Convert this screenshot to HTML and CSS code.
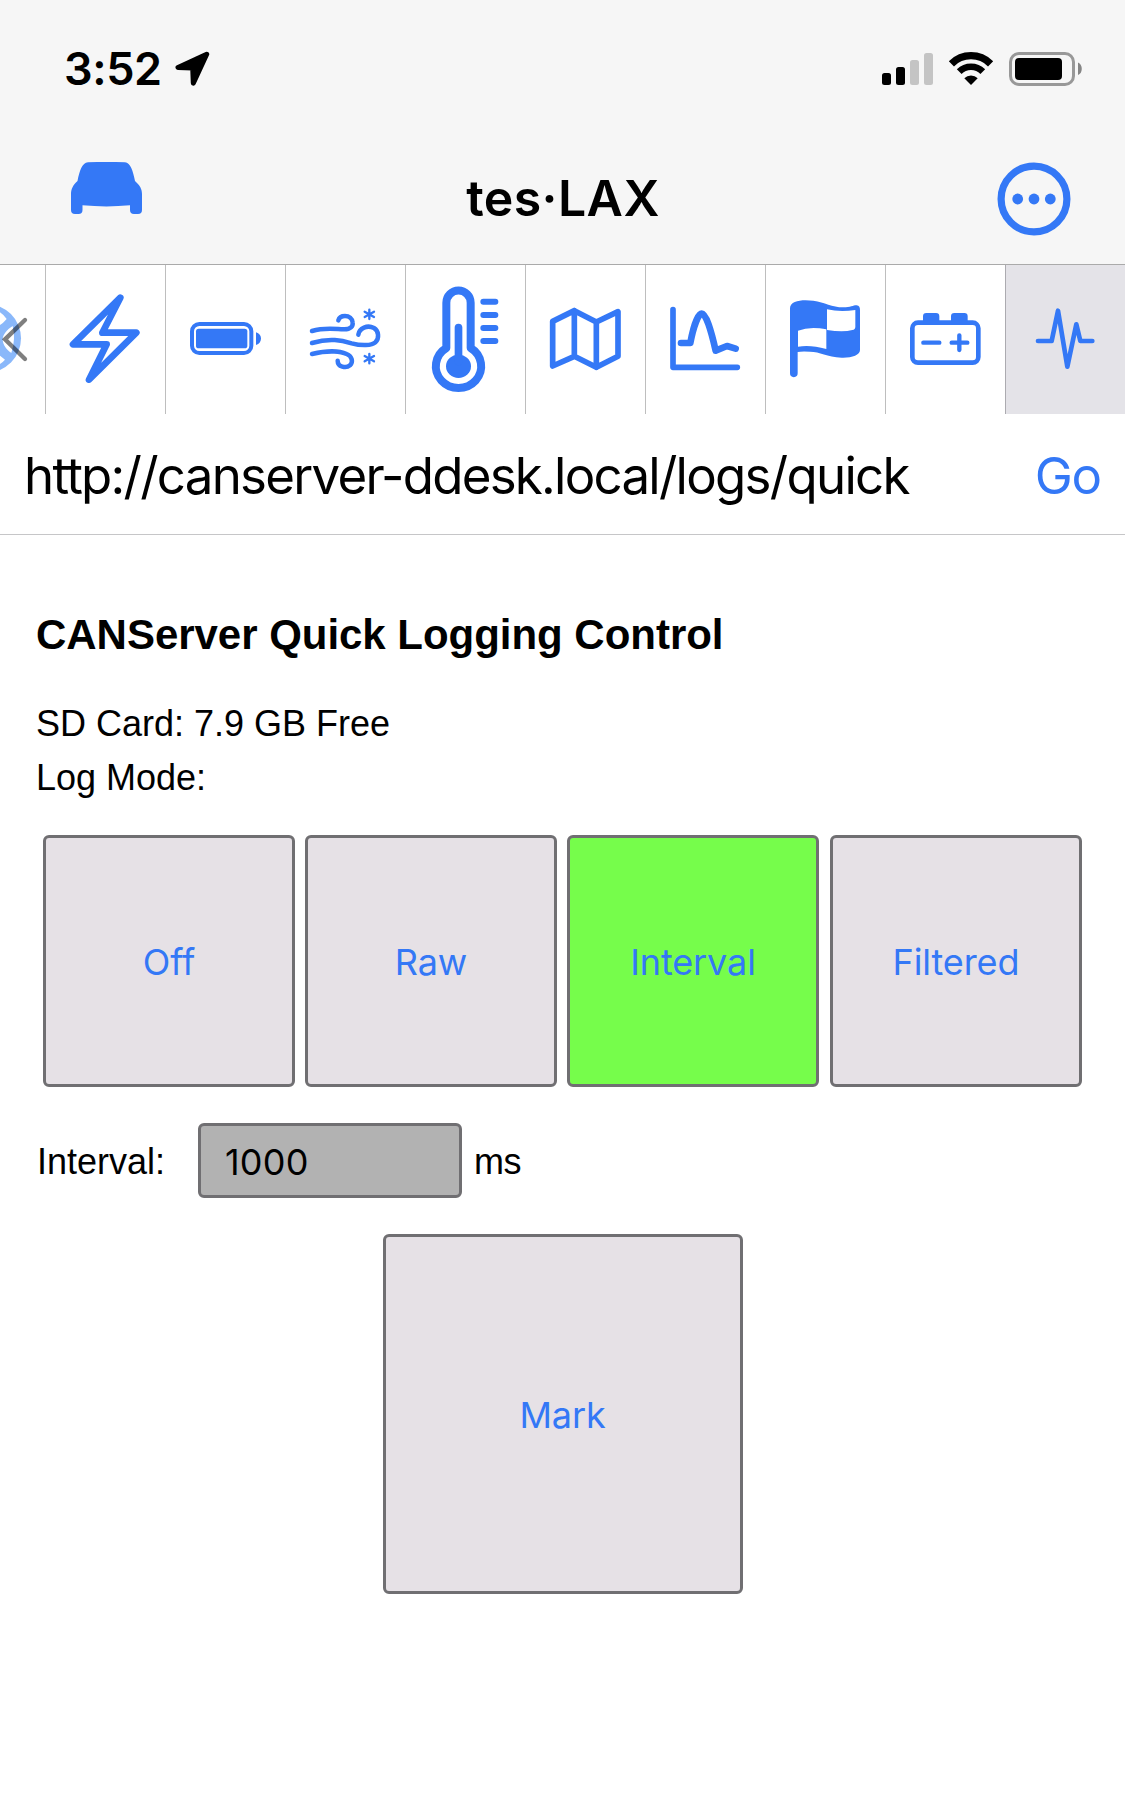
FILE: index.html
```html
<!DOCTYPE html>
<html lang="en">
<head>
<meta charset="utf-8">
<title>tes·LAX</title>
<link rel="stylesheet" href="styles.css">
</head>
<body>
<header class="header">
  <div class="status">
    <span class="time">3:52</span>
    <svg class="locate" width="36" height="36" viewBox="174 52 36 36"><path d="M206.7 55.2 178 68.4 192.7 69 193.3 84.2Z" fill="#000" stroke="#000" stroke-width="5" stroke-linejoin="round"/></svg>
    <div class="indicators">
      <svg width="51" height="34" viewBox="882 52 51 34"><rect x="882" y="73" width="9" height="12" rx="2.5"/><rect x="896" y="67" width="9" height="18" rx="2.5"/><g fill="#c4c4c4"><rect x="910" y="60" width="9" height="25" rx="2.5"/><rect x="924" y="53" width="9" height="32" rx="2.5"/></g></svg>
      <svg width="46" height="34" viewBox="948 52 46 34"><g fill="none" stroke="#000"><path stroke-width="7.3" d="M951.4 63.8A27.75 27.75 0 0 1 990.6 63.8"/><path stroke-width="6.7" d="M959.2 71.6A16.75 16.75 0 0 1 982.8 71.6"/></g><path d="M964.3 78.3A9.5 9.5 0 0 1 977.7 78.3L971 85Z"/></svg>
      <svg width="74" height="34" viewBox="1009 52 74 34"><rect x="1010.5" y="53.5" width="63" height="31" rx="8.5" fill="none" stroke="#989898" stroke-width="3"/><rect x="1015" y="58" width="47" height="22" rx="4"/><path d="M1078 62.5C1083 64 1083 73.500 1078 75Z" fill="#858585"/></svg>
    </div>
  </div>
  <div class="nav">
    <svg width="71" height="74" viewBox="71 162 71 74"><path fill="#3478f6" d="M88 162.300Q106.500 161.500 125 162.300C130.500 163 133 171 135 181 140 185.500 142 189 142 194V210Q142 214 138 214H134Q130 214 130 210V205.300Q106.500 207.500 82.500 205.300V210Q82.500 214 78.500 214H75Q71 214 71 210V194C71 189 73 185 77.500 181 79.500 171 82 163 88 162.300Z"/></svg>
    <h1 class="title">tes·LAX</h1>
    <svg width="74" height="74" viewBox="997.300 161.700 74 74"><circle cx="1034.300" cy="198.700" r="32.900" fill="none" stroke="#3478f6" stroke-width="7.200"/><g fill="#3478f6"><circle cx="1018" cy="198.700" r="5.400"/><circle cx="1034.300" cy="198.700" r="5.400"/><circle cx="1050.600" cy="198.700" r="5.400"/></g></svg>
  </div>
</header>

<nav class="tabs">
  <a class="tab tab-clipped"><svg width="45" height="149" viewBox="0 30 135 447"><circle cx="-40" cy="250" r="103" fill="#8ab8fa"/><path fill="#fff" d="M38 213C20 224 8 240 8 253 8 270 20 285 34 294Q48 253 38 213ZM0 172Q12 180 20 192 10 204 0 210ZM0 302Q8 308 15 314 8 322 0 327Z"/><path d="M75 195 15 253 75 312" fill="none" stroke="#000" stroke-opacity=".5" stroke-width="13" stroke-linecap="round"/></svg></a>
  <a class="tab"><svg viewBox="138 30 357 447"><path class="line" stroke-width="20" d="M361 128 219 268H320L267 374 409 233H307Z"/></svg></a>
  <a class="tab"><svg viewBox="498 30 357 447"><rect class="line" stroke-width="12" x="576" y="207" width="178" height="87" rx="22"/><rect class="solid" x="588" y="221" width="154" height="59" rx="8"/><path class="solid" d="M768 232C788 238 788 264 768 270Z"/></svg></a>
  <a class="tab"><svg viewBox="18 30 357 447"><path class="line" stroke-width="13.500" d="M96 228C135 216 165 222 190 223 213 224 219 213 218 203 217 190 207 183 195 183 184 183 177 189 175 196M96 264C150 248 185 256 215 265 245 273 275 272 286 262 299 250 296 227 282 219 262 209 238 219 235 239M96 297C150 284 185 290 200 297 217 304 220 322 210 331 198 341 173 336 173 317"/><path class="line" stroke-width="7" d="M268 164V192M254 170 282 186M254 186 282 170M268 297V325M254 303 282 319M254 319 282 303"/></svg></a>
  <a class="tab"><svg viewBox="378 30 357 447"><path class="line" stroke-width="24" d="M499 279V143A36.500 36.500 0 0 1 572 143V279A68 65 0 1 1 499 279Z"/><ellipse class="solid" cx="535.500" cy="334" rx="37.500" ry="35"/><path class="line" stroke-width="23" d="M535.500 218V320"/><path class="line" stroke-width="18" d="M610 140H646M610 180H646M610 219H646M610 258H646"/></svg></a>
  <a class="tab"><svg viewBox="18 30 357 447"><path class="line" stroke-width="17" d="M98 199 163 167 229 201 294 170V304L229 337 163 304 98 333ZM163 167V304M229 201V337"/></svg></a>
  <a class="tab"><svg viewBox="378 30 357 447"><path class="line" stroke-width="17" d="M459 164V337H652"/><path class="line" stroke-width="20" d="M483 264H511C520 215 535 176 545 176 558 176 573 225 587 287L621 273 647 281"/></svg></a>
  <a class="tab"><svg viewBox="18 30 357 447"><path class="solid" fill-rule="evenodd" d="M90 160C90 135 130 133 160 137 195 142 215 157 250 157 272 157 282 150 290 151 298 152 300 158 300 165V285C300 300 275 309 245 308 200 306 180 290 150 290Q125 288 113 291V355A11 11 0 0 1 90 355ZM201 163V225Q250 233 277 225 286 223 286 215V165Q240 172 201 163ZM114 227V275Q150 268 199 282V223Q150 213 114 227Z"/></svg></a>
  <a class="tab"><svg viewBox="378 30 357 447"><rect class="line" stroke-width="14" x="457" y="203" width="198" height="120" rx="17"/><path class="solid" d="M489 202V184Q489 174 499 174H528Q538 174 538 184V202ZM573 202V184Q573 174 583 174H613Q623 174 623 184V202Z"/><path class="line" stroke-width="13" d="M490 263H538M575 263H622M598 241V285"/></svg></a>
  <a class="tab tab-active"><svg viewBox="738 30 357 447"><path class="line" stroke-width="14" d="M834 258H875L894 167 922 335 949 208 961 258H997"/></svg></a>
</nav>

<div class="address">
  <span class="url">http://canserver-ddesk.local/logs/quick</span>
  <a class="go">Go</a>
</div>

<main class="page">
  <h2 class="heading">CANServer Quick Logging Control</h2>
  <p class="info">SD Card: 7.9 GB Free</p>
  <p class="info">Log Mode:</p>
  <div class="modes">
    <button class="btn">Off</button>
    <button class="btn">Raw</button>
    <button class="btn btn-on">Interval</button>
    <button class="btn">Filtered</button>
  </div>
  <div class="interval">
    <label class="interval-label" for="ms">Interval:</label>
    <input class="field" id="ms" type="text" value="1000">
    <span class="unit">ms</span>
  </div>
  <button class="btn mark">Mark</button>
</main>
</body>
</html>
```
FILE: styles.css
```css
* { box-sizing: border-box; }

body {
  margin: 0;
  width: 1125px;
  height: 1817px;
  overflow: hidden;
  background: #fff;
  color: #000;
  font-family: Inter, sans-serif;
}

svg { display: block; flex: none; }

.header {
  height: 265px;
  background: #f6f6f6;
  border-bottom: 1px solid #aaa;
}

.status {
  height: 132px;
  padding: 6px 42px 0 64px;
  display: flex;
  align-items: center;
}
.time { width: 110px; font-size: 45px; font-weight: 600; line-height: 60px; letter-spacing: -0.4px; }
.indicators { margin-left: auto; display: flex; gap: 15px; }

.nav {
  height: 132px;
  padding: 1px 54px 0 71px;
  display: flex;
  align-items: center;
  justify-content: space-between;
}
.title {
  margin: 0 13px 2px 0;
  font-size: 50px;
  font-weight: 600;
  line-height: 60px;
  letter-spacing: 0.4px;
}

.tabs { display: flex; height: 149px; }
.tab { width: 120px; height: 149px; border-left: 1px solid #bebebe; }
.tab svg { width: 119px; height: 149px; }
.tab-clipped { width: 45px; border-left: 0; }
.tab-clipped svg { width: 45px; }
.tab-active { background: #e4e3e8; border-left-color: #acabb0; }
.line { fill: none; stroke: #3478f6; stroke-linecap: round; stroke-linejoin: round; }
.solid { fill: #3478f6; }

.address {
  height: 121px;
  padding: 2px 24px 0 24px;
  display: flex;
  align-items: center;
  justify-content: space-between;
  border-bottom: 1px solid #c6c6c8;
  font-size: 51px;
  white-space: nowrap;
}
.url { letter-spacing: -1.73px; }
.go { color: #3478f6; letter-spacing: -1.2px; }

.page { padding: 74px 36px 0; font-family: "Liberation Sans", sans-serif; font-size: 36px; }
.heading { margin: 0 0 36px; font-size: 42px; line-height: 52px; letter-spacing: -0.03px; white-space: nowrap; }
.info { margin: 0; line-height: 54px; }

.modes {
  margin: 30px 7px 36px;
  display: flex;
  gap: 10px;
}
.btn {
  width: 252px;
  height: 252px;
  padding: 2px 0 0;
  border: 3px solid #706f72;
  border-radius: 6px;
  background: #e6e1e6;
  color: #3478f6;
  font: 36px Inter, sans-serif;
  letter-spacing: -0.1px;
  font-variant-ligatures: none;
}
.btn:last-child { margin-left: 1px; }
.btn-on { background: #76fd4b; }

.interval { display: flex; align-items: center; height: 75px; }
.interval-label { width: 162px; padding: 3px 0 0 1px; }
.field {
  width: 264px;
  height: 75px;
  padding: 2px 24px 0;
  border: 3px solid #706f72;
  border-radius: 6px;
  background: #b2b2b2;
  color: #000;
  font: 36px Inter, sans-serif;
  letter-spacing: 0.2px;
}
.unit { padding-top: 3px; margin-left: 12px; letter-spacing: -0.5px; }
.btn.mark { display: block; width: 360px; height: 360px; margin: 36px auto 0; }
```
